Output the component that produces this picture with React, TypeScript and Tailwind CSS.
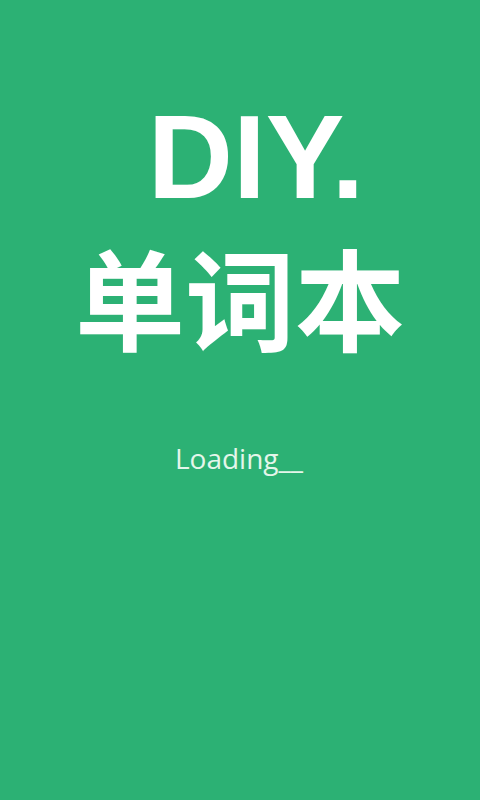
export default function App() {
  return (
    <div className="flex h-[800px] w-full flex-col items-center bg-[#2cb174] text-white">
      {/* Title */}
      <h1 className="mt-[97px] pl-[32px] font-['Liberation_Sans',Arial,sans-serif] text-[118px] font-bold leading-[120px]">
        DIY.
      </h1>
      <h2 className="mt-[8px] font-['Noto_Sans_CJK_SC','Noto_Sans',sans-serif] text-[110px] font-bold leading-[140px]">
        单词本
      </h2>

      {/* Status */}
      <p className="mt-[74px] pr-[2px] font-['Open_Sans',sans-serif] text-[28px] leading-[38px] text-[#e4f6ea]">
        Loading__
      </p>
    </div>
  )
}
